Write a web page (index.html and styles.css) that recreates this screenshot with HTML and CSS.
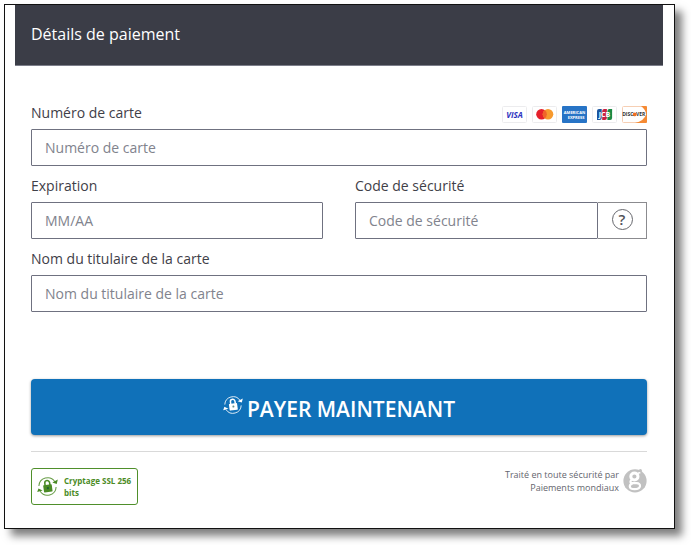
FILE: index.html
```html
<!DOCTYPE html>
<html lang="fr">
<head>
    <meta charset="UTF-8">
    <meta name="viewport" content="width=device-width, initial-scale=1.0">
    <title>Détails de paiement</title>
    <link rel="stylesheet" href="styles.css">
</head>
<body>
    <!-- Icône cadenas, partagée par le bouton et le badge SSL -->
    <svg class="sprite" width="0" height="0" aria-hidden="true">
        <symbol id="lock" viewBox="0 0 20 20">
            <path d="M1.8 9.6A8.3 8.3 0 0 1 17 5.4M18.2 10.4A8.3 8.3 0 0 1 3 14.6" fill="none" stroke="currentColor" stroke-width="1" opacity="0.85"/>
            <path d="M14.6 6.2L19.8 3.4L18.8 7.6ZM5.4 13.8L0.2 15.2L1.4 11.8Z" fill="currentColor"/>
            <g transform="rotate(-8 10 10)">
                <rect x="6" y="8.4" width="8.2" height="6.8" rx="0.6" fill="currentColor"/>
                <path d="M7.9 9V6.6A2.3 2.3 0 0 1 12.5 6.6V9" fill="none" stroke="currentColor" stroke-width="1.5"/>
                <circle class="keyhole" cx="10.2" cy="11.6" r="1"/>
            </g>
        </symbol>
    </svg>

    <main class="container">
        <header class="header">
            <h1>Détails de paiement</h1>
        </header>

        <form class="form">
            <div class="field">
                <div class="label-row">
                    <label for="card-number">Numéro de carte</label>
                    <div class="cards">
                        <svg class="card" viewBox="0 0 25 17" role="img" aria-label="Visa">
                            <rect x="0.5" y="0.5" width="24" height="16" rx="1" fill="#fff" stroke="#ececee"/>
                            <text x="12.5" y="11.5" class="logo-text visa">VISA</text>
                        </svg>
                        <svg class="card" viewBox="0 0 25 17" role="img" aria-label="Mastercard">
                            <rect x="0.5" y="0.5" width="24" height="16" rx="1" fill="#fff" stroke="#ececee"/>
                            <circle cx="9.5" cy="8.3" r="5.3" fill="#e5202b"/>
                            <circle cx="16" cy="8.3" r="5.3" fill="#f79a2e"/>
                            <path d="M12.75 4.1A5.3 5.3 0 0 1 12.75 12.5A5.3 5.3 0 0 1 12.75 4.1Z" fill="#f0642a"/>
                        </svg>
                        <svg class="card" viewBox="0 0 25 17" role="img" aria-label="American Express">
                            <rect width="25" height="17" rx="1" fill="#2774c6"/>
                            <text x="12.5" y="8" class="logo-text amex">AMERICAN</text>
                            <text x="14" y="13" class="logo-text amex">EXPRESS</text>
                        </svg>
                        <svg class="card" viewBox="0 0 25 17" role="img" aria-label="JCB">
                            <rect x="0.5" y="0.5" width="24" height="16" rx="1" fill="#fff" stroke="#ececee"/>
                            <path d="M5 14V5Q5 3 7 3H9.7V12Q9.7 14 7.7 14Z" fill="#1a559f"/>
                            <path d="M10.2 14V5Q10.2 3 12.2 3H14.9V12Q14.9 14 12.9 14Z" fill="#c9203f"/>
                            <path d="M15.4 14V5Q15.4 3 17.4 3H20.1V12Q20.1 14 18.1 14Z" fill="#1c8a43"/>
                            <text x="12.5" y="10.5" class="logo-text jcb">JCB</text>
                        </svg>
                        <svg class="card" viewBox="0 0 25 17" role="img" aria-label="Discover">
                            <rect x="0.5" y="0.5" width="24" height="16" rx="1" fill="#fff" stroke="#f6cfb4"/>
                            <path d="M13 17Q22 15 24.2 8.5Q24 4 19 0H24Q25 0 25 1V16Q25 17 24 17Z" fill="#f58a34"/>
                            <circle cx="12.6" cy="8.4" r="1.9" fill="#f26f21"/>
                            <text x="5.8" y="10.2" class="logo-text discover">DISC</text>
                            <text x="18.6" y="10.2" class="logo-text discover">VER</text>
                        </svg>
                    </div>
                </div>
                <input type="text" id="card-number" placeholder="Numéro de carte">
            </div>

            <div class="columns">
                <div class="field">
                    <div class="label-row">
                        <label for="expiration">Expiration</label>
                    </div>
                    <input type="text" id="expiration" placeholder="MM/AA">
                </div>
                <div class="field">
                    <div class="label-row">
                        <label for="cvv">Code de sécurité</label>
                    </div>
                    <div class="input-group">
                        <input type="text" id="cvv" placeholder="Code de sécurité">
                        <button type="button" class="help" aria-label="Aide"><span class="help-icon">?</span></button>
                    </div>
                </div>
            </div>

            <div class="field">
                <div class="label-row">
                    <label for="holder">Nom du titulaire de la carte</label>
                </div>
                <input type="text" id="holder" placeholder="Nom du titulaire de la carte">
            </div>

            <button type="submit" class="pay">
                <svg class="pay-icon" aria-hidden="true"><use href="#lock"/></svg>
                <span>PAYER MAINTENANT</span>
            </button>
        </form>

        <footer class="footer">
            <div class="ssl">
                <svg class="ssl-icon" aria-hidden="true"><use href="#lock"/></svg>
                <span>Cryptage SSL 256 bits</span>
            </div>
            <div class="secured">
                <p>Traité en toute sécurité par<br>Paiements mondiaux</p>
                <svg class="secured-logo" viewBox="0 0 24 24" aria-hidden="true">
                    <circle cx="12" cy="12.4" r="11.6" fill="#c1c1c1"/>
                    <g fill="none" stroke="#fff">
                        <ellipse cx="11.4" cy="8" rx="3.6" ry="3.5" stroke-width="3"/>
                        <path d="M8.4 11.4Q6.2 14 9 14.6H13.6Q17.2 14.8 17 17.6Q16.6 20.6 11.6 20.6Q6.8 20.6 6.8 18Q6.8 15.8 9.6 14.9" stroke-width="2.2"/>
                        <path d="M14.2 6Q15.2 3.8 17.4 4.4" stroke-width="1.6"/>
                    </g>
                    <circle cx="17.4" cy="2.2" r="1.6" fill="#c1c1c1"/>
                </svg>
            </div>
        </footer>
    </main>
</body>
</html>
```
FILE: styles.css
```css
* {
    box-sizing: border-box;
}
body {
    font-family: "Open Sans", "Noto Sans", sans-serif;
    font-size: 14px;
    line-height: 20px;
    color: #3f4048;
    background: #fff;
    margin: 0;
    padding: 4px 16px 16px 4px;
}
.sprite {
    display: block;
}
.container {
    background: #fff;
    border: 1px solid #111;
    padding: 0 11px 23px 10px;
    box-shadow: 7px 7px 8px rgba(0, 0, 0, 0.5);
}
.header {
    background: #3b3d47;
    padding: 17px 16px 19px;
    border-bottom: 1px solid #7c7e8a;
}
.header h1 {
    color: #fff;
    font-size: 16px;
    font-weight: 400;
    line-height: 24px;
    margin: 0;
}
.form {
    padding: 37px 16px 16px;
}
.field {
    margin-bottom: 10px;
}
.label-row {
    display: flex;
    justify-content: space-between;
    align-items: flex-end;
    height: 20px;
    margin-bottom: 6px;
}
.cards {
    display: flex;
    gap: 5px;
}
.card {
    display: block;
    width: 25px;
    height: 17px;
}
.logo-text {
    font-family: "Open Sans", sans-serif;
    font-weight: 700;
    text-anchor: middle;
}
.visa {
    fill: #2d33c0;
    font-size: 8px;
    font-style: italic;
}
.amex {
    fill: #fff;
    font-size: 4px;
}
.jcb {
    fill: #fff;
    font-size: 7px;
}
.discover {
    fill: #333;
    font-size: 5px;
}
input {
    display: block;
    width: 100%;
    height: 37px;
    padding: 0 13px;
    border: 1px solid #6f7180;
    border-radius: 1px;
    background: #fff;
    font: inherit;
    color: #3f4048;
}
input::placeholder {
    color: #81838d;
    opacity: 1;
}
.columns {
    display: grid;
    grid-template-columns: 1fr 1fr;
    gap: 32px;
}
.input-group {
    display: flex;
}
.input-group input {
    flex: 1;
    min-width: 0;
}
.help {
    display: flex;
    align-items: center;
    justify-content: center;
    width: 49px;
    padding: 0 0 2px;
    border: 1px solid #8b8b8f;
    border-left: 0;
    background: #fff;
}
.help-icon {
    width: 21px;
    height: 21px;
    border: 1px solid #66676d;
    border-radius: 50%;
    font-family: "Open Sans", sans-serif;
    font-size: 15px;
    font-weight: 600;
    line-height: 19px;
    text-align: center;
    color: #505157;
}
.pay {
    display: flex;
    align-items: center;
    justify-content: center;
    gap: 4px;
    width: 100%;
    height: 56px;
    margin-top: 67px;
    padding: 4px 0 0;
    border: 0;
    border-radius: 4px;
    background: #1071b9;
    color: #fff;
    font-family: "Open Sans", sans-serif;
    font-size: 21px;
    font-weight: 600;
    line-height: 28px;
    box-shadow: 0 1px 3px rgba(0, 0, 0, 0.4);
}
.pay-icon {
    width: 20px;
    height: 20px;
    margin-bottom: 8px;
}
.keyhole {
    fill: rgba(0, 70, 60, 0.6);
}
.footer {
    display: flex;
    justify-content: space-between;
    align-items: flex-start;
    margin: 0 16px;
    padding-top: 16px;
    border-top: 1px solid #d9d9d9;
}
.ssl {
    display: flex;
    align-items: center;
    gap: 6px;
    width: 107px;
    height: 37px;
    padding-left: 5px;
    border: 1px solid #4f8f2b;
    border-radius: 3px;
    color: #4b8b25;
    font-size: 8px;
    font-weight: 700;
    line-height: 12px;
}
.ssl-icon {
    flex: none;
    width: 21px;
    height: 21px;
}
.secured {
    display: flex;
    gap: 4px;
    color: #64656d;
    font-size: 9px;
    line-height: 13px;
    text-align: right;
}
.secured p {
    margin: 0;
}
.secured-logo {
    width: 24px;
    height: 25px;
}
```
